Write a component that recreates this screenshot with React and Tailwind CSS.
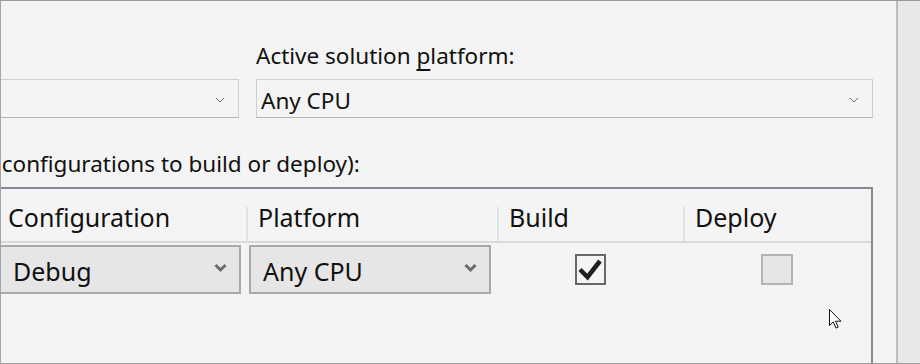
const TopSelect = ({ w, value }) => (
  <div className={`${w} h-[39px] shrink-0 flex items-center justify-between border border-[#cfd0d0] border-b-[#b3b4b4] pl-[4px] pr-[13px]`}>
    <span className="pt-[4px] text-[22.5px] leading-[30px] whitespace-nowrap">{value}</span>
    <svg width="10" height="6" viewBox="0 0 10 6" className="mt-[3px]">
      <path d="M1 1l4 4 4-4" fill="none" stroke="#6b6b6b" strokeWidth="1" />
    </svg>
  </div>
);

const RowSelect = ({ value }) => (
  <div className="h-[49px] flex items-center justify-between border-2 border-[#a9a9a9] bg-[#e6e6e6] pl-[12px] pr-[12px]">
    <span className="pt-[3px] text-[25px] leading-[30px] whitespace-nowrap">{value}</span>
    <svg width="13" height="10" viewBox="0 0 13 10" className="mb-[4px]">
      <path d="M1.5 2l5 5 5-5" fill="none" stroke="#6a6a6a" strokeWidth="3" />
    </svg>
  </div>
);

const headers = ['Configuration', 'Platform', 'Build', 'Deploy'];

export default function App() {
  return (
    <div className="relative flex w-[920px] h-[364px] overflow-hidden bg-[#f3f4f3] border-t border-b border-l border-t-[#9a9a9a] border-b-[#a0a0a0] border-l-[#a5a5a5] font-['Noto_Sans',sans-serif] text-[#111]">
      <div className="w-[895px] shrink-0 flex flex-col">
        {/* Active solution configuration / platform */}
        <div className="flex gap-[17px] mt-[40px] ml-[-62px]">
          <div className="w-[300px] shrink-0" />
          <div className="w-[617px] shrink-0 text-[22.5px] leading-[30px] whitespace-nowrap">
            Active solution <span className="underline underline-offset-[5px]">p</span>latform:
          </div>
        </div>
        <div className="flex gap-[17px] mt-[8px] ml-[-62px]">
          <TopSelect w="w-[300px]" />
          <TopSelect w="w-[617px]" value="Any CPU" />
        </div>

        <div className="mt-[31px] ml-[-6px] text-[22.5px] leading-[30px] whitespace-nowrap">
          (configurations to build or deploy):
        </div>

        {/* project contexts grid */}
        <div className="mt-[8px] ml-[-7px] w-[879px] shrink-0 flex-1 border-2 border-b-0 border-[#858b92]">
          <div className="grid grid-cols-[250px_251px_186px_188px] h-[54px] border-b-2 border-[#d8dada]">
            {headers.map((h) => (
              <div key={h} className="flex">
                <div className="w-[2px] mt-[18px] bg-[#dfe2e2]" />
                <div className="pl-[10px] pt-[13px] text-[25px] leading-[30px]">{h}</div>
              </div>
            ))}
          </div>
          <div className="grid grid-cols-[250px_251px_186px_188px] pt-[2px]">
            <div className="pl-[3px] pr-[5px]">
              <RowSelect value="Debug" />
            </div>
            <div className="pl-[3px] pr-[6px]">
              <RowSelect value="Any CPU" />
            </div>
            <div className="flex items-center justify-center">
              <div className="w-[31px] h-[31px] border-2 border-[#686868] bg-[#f3f4f3]">
                <svg width="27" height="27" viewBox="0 0 27 27">
                  <path d="M3 13.5l7.5 7.5L23 5" fill="none" stroke="#1f1f1f" strokeWidth="4.5" />
                </svg>
              </div>
            </div>
            <div className="flex items-center justify-center">
              <div className="w-[32px] h-[31px] border-2 border-[#b3b3b3] bg-[#e6e6e6]" />
            </div>
          </div>
        </div>
      </div>
      <div className="flex-1 border-l-2 border-[#bcbcbc] bg-[#e8e8e8]" />

      {/* mouse pointer */}
      <svg className="absolute left-[828px] top-[308px]" width="14" height="21" viewBox="0 0 14 21">
        <path d="M0.5 0.5v16l3.8-3.6 2.7 6.2 2.2-1-2.6-5.9h5.3z" fill="#fff" stroke="#111" strokeWidth="1" />
      </svg>
    </div>
  );
}
